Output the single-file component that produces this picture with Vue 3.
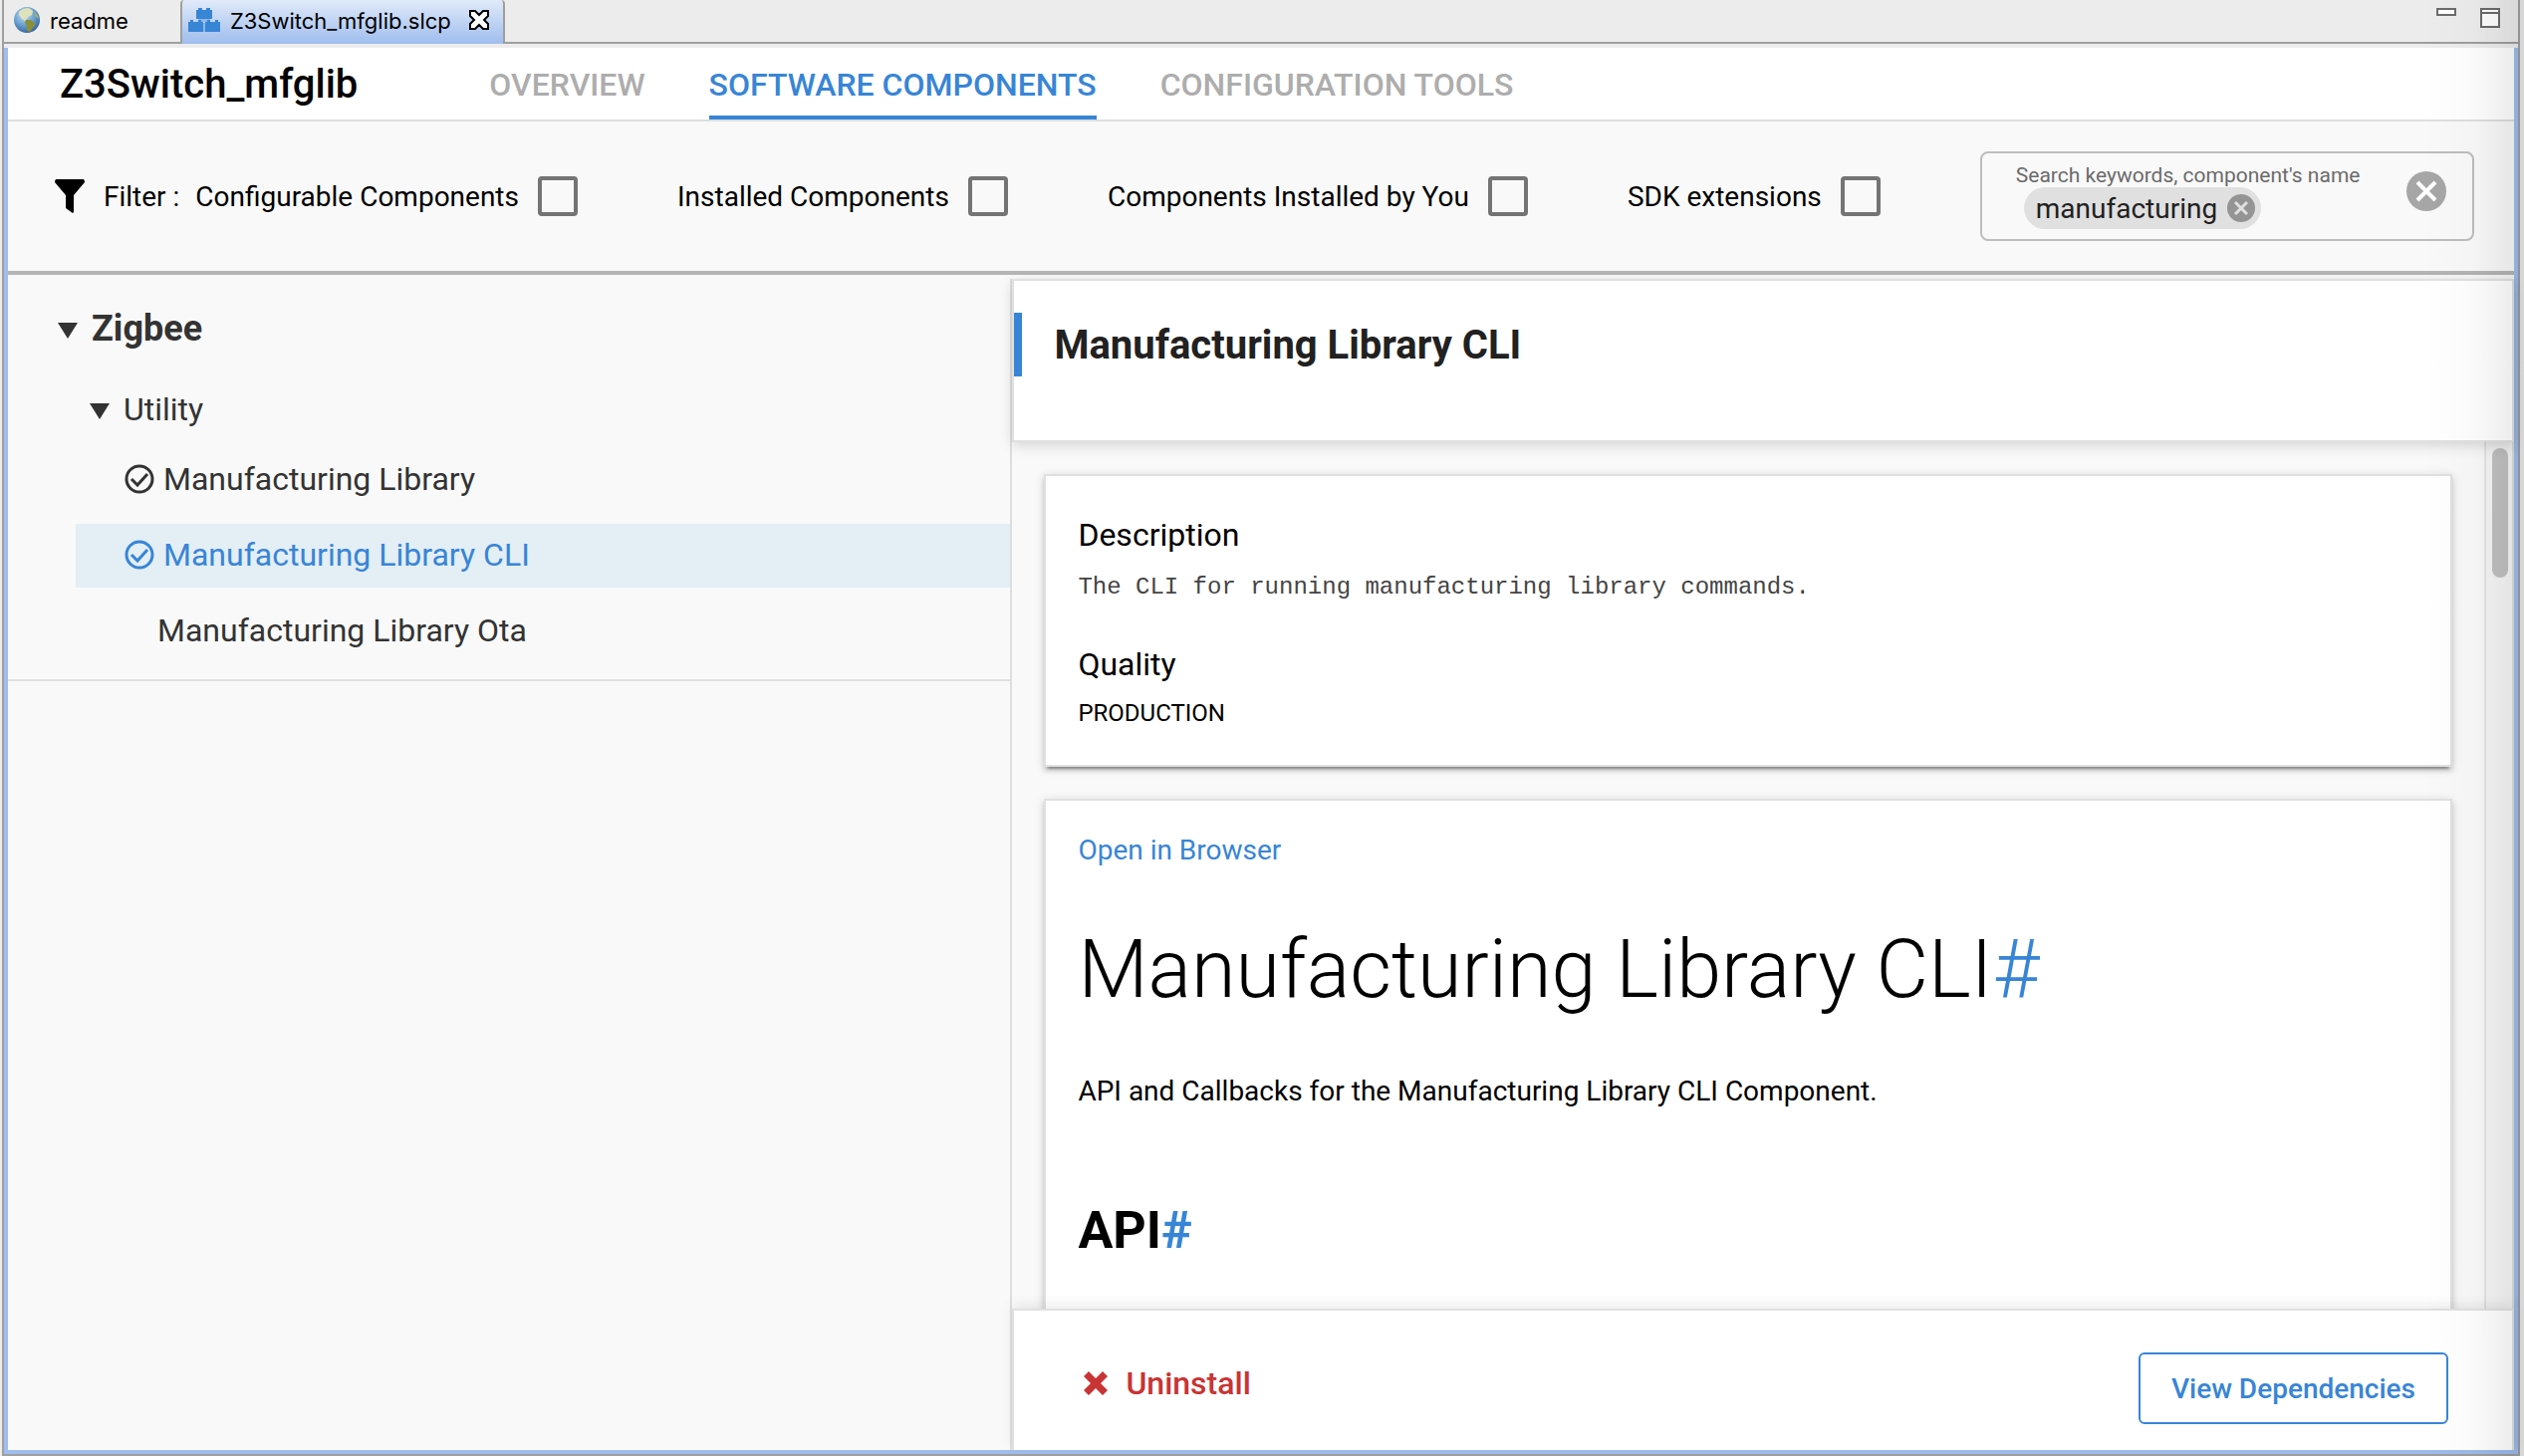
<script setup>
import { ref } from 'vue'

const pages = ['OVERVIEW', 'SOFTWARE COMPONENTS', 'CONFIGURATION TOOLS']
const activePage = ref('SOFTWARE COMPONENTS')

const filters = ref([
  { id: 'configurable', label: 'Configurable Components', on: false },
  { id: 'installed', label: 'Installed Components', on: false },
  { id: 'by-you', label: 'Components Installed by You', on: false },
  { id: 'sdk', label: 'SDK extensions', on: false },
])

const components = [
  { name: 'Manufacturing Library', installed: true },
  { name: 'Manufacturing Library CLI', installed: true },
  { name: 'Manufacturing Library Ota', installed: false },
]
const selected = ref('Manufacturing Library CLI')
</script>

<template>
  <div class="window">
    <div class="editor">
      <div class="file-tabs">
        <button class="file-tab" type="button">
          <svg class="globe" viewBox="0 0 26 26" aria-hidden="true">
            <defs>
              <radialGradient id="sea" cx="0.4" cy="0.3" r="0.75">
                <stop offset="0" stop-color="#cfe3f2" />
                <stop offset="0.5" stop-color="#6fa5d3" />
                <stop offset="1" stop-color="#2f5f9c" />
              </radialGradient>
            </defs>
            <circle cx="13" cy="13" r="13" fill="url(#sea)" />
            <path d="M5 5 Q9 1 15 1 L19 4 L18 8 L14 10 L11 14 L8 12 L5 8Z" fill="#dfe3bd" />
            <path d="M12 13 L17 13 L22 17 L19 21 L16 25 L13 24 L13 19 L11 16Z" fill="#8b8f3c" />
            <path d="M20 4 L24 9 L25 12 L21 9Z" fill="#a5b26a" />
          </svg>
          <span>readme</span>
        </button>
        <button class="file-tab current" type="button">
          <svg class="bricks" viewBox="0 0 32 24" aria-hidden="true">
            <path fill="#8db8e8" d="M10 10h12v4H10zM15 15h2v9h-2z" />
            <path fill="#3885d6" d="M8 2h2V0h4v2h4V0h4v2h2v9H8zM0 14h2v-2h3v2h5v-2h3v2h2v10H0zM17 14h2v-2h3v2h5v-2h3v2h2v10H17z" />
          </svg>
          <span>Z3Switch_mfglib.slcp</span>
          <svg class="close" viewBox="0 0 20 20" aria-hidden="true">
            <path d="M1 1h5l4 4 4-4h5v5l-4 4 4 4v5h-5l-4-4-4 4H1v-5l4-4-4-4z" fill="#fff" stroke="#000" stroke-width="2" />
          </svg>
        </button>
        <div class="window-controls">
          <button type="button" aria-label="Minimize">
            <svg width="20" height="20" viewBox="0 0 20 20"><rect x="1" y="1" width="18" height="6" fill="#fff" stroke="#6b6b6b" stroke-width="2" /></svg>
          </button>
          <button type="button" aria-label="Maximize">
            <svg width="20" height="20" viewBox="0 0 20 20"><path d="M1 1h18v18H1zM1 5h18" fill="#fff" stroke="#6b6b6b" stroke-width="2" /></svg>
          </button>
        </div>
      </div>

      <div class="content">
        <header class="page-head">
          <h1>Z3Switch_mfglib</h1>
          <nav>
            <a v-for="page in pages" :key="page" href="#" :class="{ active: page === activePage }" @click.prevent="activePage = page">{{ page }}</a>
          </nav>
        </header>

        <section class="filters">
          <div class="filter-lead">
            <svg class="funnel" viewBox="0 0 30 34" aria-hidden="true">
              <path d="M1 0h28q1 1 1 3L19 16v17l-1 1-7-5V16L0 3q0-2 1-3z" fill="#000" />
            </svg>
            <span>Filter :</span>
          </div>
          <div class="filter-list">
            <div v-for="f in filters" :key="f.id" class="filter">
              <label :for="f.id">{{ f.label }}</label>
              <input :id="f.id" v-model="f.on" type="checkbox">
            </div>
          </div>
          <div class="search">
            <div class="search-main">
              <label for="search">Search keywords, component's name</label>
              <div class="search-line">
                <span class="chip">
                  manufacturing
                  <button type="button" aria-label="Remove manufacturing">
                    <svg width="28" height="28" viewBox="0 0 28 28"><circle cx="14" cy="14" r="14" fill="#949494" /><path d="M8 8l12 12M20 8L8 20" stroke="#e0e0e0" stroke-width="3" /></svg>
                  </button>
                </span>
                <input id="search" type="text">
              </div>
            </div>
            <button class="clear" type="button" aria-label="Clear search">
              <svg width="40" height="40" viewBox="0 0 40 40"><circle cx="20" cy="20" r="20" fill="#a6a6a6" /><path d="M11 11l18 18M29 11L11 29" stroke="#fff" stroke-width="4" /></svg>
            </button>
          </div>
        </section>

        <main class="panes">
          <aside class="tree">
            <div class="group">
              <svg class="arrow" viewBox="0 0 20 16" aria-hidden="true"><path d="M0 0h20L10 16z" fill="#333" /></svg>
              <span>Zigbee</span>
            </div>
            <div class="subgroup">
              <svg class="arrow" viewBox="0 0 20 16" aria-hidden="true"><path d="M0 0h20L10 16z" fill="#333" /></svg>
              <span>Utility</span>
            </div>
            <ul>
              <li v-for="c in components" :key="c.name">
                <button type="button" :class="{ selected: c.name === selected, bare: !c.installed }" @click="selected = c.name">
                  <svg v-if="c.installed" class="check" viewBox="0 0 30 30" aria-hidden="true">
                    <circle cx="15" cy="15" r="13" fill="none" stroke="currentColor" stroke-width="3" />
                    <path d="M7 15l6 6L23 10" fill="none" stroke="currentColor" stroke-width="3" />
                  </svg>
                  <span>{{ c.name }}</span>
                </button>
              </li>
            </ul>
          </aside>

          <section class="details">
            <div class="details-head">
              <h2>Manufacturing Library CLI</h2>
            </div>
            <div class="details-body">
              <div class="cards">
                <article class="card summary">
                  <h3>Description</h3>
                  <p class="mono">The CLI for running manufacturing library commands.</p>
                  <h3>Quality</h3>
                  <p class="quality">PRODUCTION</p>
                </article>
                <article class="card docs">
                  <a class="open" href="#">Open in Browser</a>
                  <h1>Manufacturing Library CLI<a href="#">#</a></h1>
                  <p>API and Callbacks for the Manufacturing Library CLI Component.</p>
                  <h2>API<a href="#">#</a></h2>
                </article>
              </div>
              <div class="scrollbar" aria-hidden="true"><div class="thumb"></div></div>
            </div>
            <footer>
              <button class="uninstall" type="button">
                <svg width="26" height="26" viewBox="0 0 26 26" aria-hidden="true"><path d="M6 1l7 7 7-7 5 5-7 7 7 7-5 5-7-7-7 7-5-5 7-7-7-7z" fill="#c93434" /></svg>
                Uninstall
              </button>
              <button class="dependencies" type="button">View Dependencies</button>
            </footer>
          </section>
        </main>
      </div>
    </div>
  </div>
</template>

<style>
body {
  margin: 0;
}
</style>

<style scoped>
* {
  box-sizing: border-box;
}

h1,
h2,
h3,
p,
ul {
  margin: 0;
  padding: 0;
}

button {
  font: inherit;
  color: inherit;
  background: none;
  border: 0;
  padding: 0;
  cursor: pointer;
}

svg {
  display: block;
  flex: none;
}

a {
  color: #3885d6;
  text-decoration: none;
}

.window {
  position: relative;
  height: 100vh;
  padding: 0 4px 0 2px;
  background: #ececec;
  font-family: Roboto, "Liberation Sans", sans-serif;
  font-size: 28px;
  color: #000;
}

.window::after {
  content: "";
  position: absolute;
  inset: 0 0 0 auto;
  width: 100px;
  background: linear-gradient(to right, transparent, rgba(0, 0, 0, 0.02) 50%, rgba(0, 0, 0, 0.09));
  pointer-events: none;
}

.editor {
  display: flex;
  flex-direction: column;
  height: 100%;
  border: 2px solid #9f9f9f;
  border-top: 0;
}

.file-tabs {
  display: flex;
  height: 44px;
  flex: none;
  border-bottom: 2px solid #9f9f9f;
  font-family: Inter, "Liberation Sans", sans-serif;
  font-size: 22px;
}

.file-tab {
  display: flex;
  align-items: center;
  height: 44px;
  gap: 10px;
  padding: 0 52px 4px 10px;
}

.file-tab.current {
  padding: 0 14px 4px 6px;
  border: 2px solid #9f9f9f;
  border-width: 0 2px;
  border-radius: 4px 4px 0 0;
  background: linear-gradient(#e0eaf9, #9fbdee);
}

.file-tab span {
  padding-top: 2px;
}

.globe {
  width: 26px;
  height: 26px;
}

.bricks {
  width: 32px;
  height: 24px;
}

.close {
  width: 20px;
  height: 20px;
  margin-left: 8px;
}

.window-controls {
  display: flex;
  gap: 24px;
  margin-left: auto;
  padding: 8px 18px 0 0;
  align-items: flex-start;
}

.content {
  display: flex;
  flex: 1;
  flex-direction: column;
  min-height: 0;
  margin-top: 4px;
  border: 4px solid #9fbdee;
  border-top: 0;
  background: #f9f9f9;
}

.page-head {
  display: flex;
  flex: none;
  height: 74px;
  padding-left: 52px;
  gap: 132px;
  background: #fff;
  border-bottom: 2px solid #dedede;
}

.page-head h1 {
  font-size: 40px;
  font-weight: 500;
  line-height: 74px;
}

.page-head nav {
  display: flex;
  gap: 64px;
}

.page-head nav a {
  font-size: 32px;
  font-weight: 500;
  line-height: 74px;
  height: 72px;
  color: #adadad;
}

.page-head nav a.active {
  color: #3885d6;
  border-bottom: 4px solid #3885d6;
}

.filters {
  display: flex;
  flex: none;
  align-items: center;
  height: 154px;
  padding: 0 40px 0 47px;
  border-bottom: 4px solid #b5b5b5;
}

.filter-lead {
  display: flex;
  align-items: center;
  gap: 19px;
  margin-right: 16px;
}

.funnel {
  width: 30px;
  height: 34px;
}

.filter-list {
  display: flex;
  gap: 100px;
  margin-right: 100px;
}

.filter {
  display: flex;
  align-items: center;
  gap: 19px;
  white-space: nowrap;
}

.filter input {
  appearance: none;
  width: 40px;
  height: 40px;
  margin: 0;
  border: 4px solid #747474;
  border-radius: 4px;
}

.search {
  display: flex;
  flex: 1;
  min-width: 0;
  height: 90px;
  padding: 10px 26px 0 34px;
  border: 2px solid #bdbdbd;
  border-radius: 8px;
}

.search-main {
  flex: 1;
  min-width: 0;
}

.search-main > label {
  display: block;
  font-size: 21px;
  line-height: 24px;
  color: #6b6b6b;
  white-space: nowrap;
}

.search-line {
  display: flex;
  padding-left: 8px;
}

.search-line input {
  flex: 1;
  min-width: 0;
  border: 0;
  outline: 0;
  background: none;
}

.chip {
  display: flex;
  align-items: center;
  gap: 10px;
  height: 42px;
  padding: 0 6px 0 12px;
  border-radius: 21px;
  background: #e0e0e0;
  color: #212121;
}

.clear {
  align-self: flex-start;
  margin-top: 8px;
}

.panes {
  display: flex;
  flex: 1;
  min-height: 0;
  padding-top: 4px;
}

.tree {
  width: 40%;
  color: #333;
  font-size: 32px;
}

.group,
.subgroup {
  display: flex;
  align-items: center;
  gap: 14px;
}

.group {
  height: 100px;
  padding-left: 50px;
  font-size: 36px;
  font-weight: 700;
}

.subgroup {
  height: 62px;
  padding-left: 82px;
}

.arrow {
  width: 20px;
  height: 16px;
  margin-top: 4px;
}

.tree ul {
  display: flex;
  flex-direction: column;
  gap: 12px;
  padding: 8px 0 16px 68px;
  border-bottom: 2px solid #e0e0e0;
  list-style: none;
}

.tree li button {
  display: flex;
  align-items: center;
  gap: 9px;
  width: 100%;
  height: 64px;
  padding: 0 0 2px 49px;
}

.tree li button.bare {
  padding-left: 82px;
}

.tree li button.selected {
  background: #e3eef5;
  color: #3885d6;
}

.check {
  width: 30px;
  height: 30px;
}

.details {
  display: flex;
  flex: 1;
  flex-direction: column;
  min-width: 0;
  border-left: 2px solid #dedede;
}

.details-head {
  position: relative;
  flex: none;
  height: 164px;
  padding-top: 32px;
  background: #fff;
  border: 2px solid #e0e0e0;
  box-shadow: 0 4px 12px rgba(0, 0, 0, 0.14);
}

.details-head h2 {
  height: 64px;
  padding-left: 32px;
  border-left: 8px solid #3885d6;
  font-size: 40px;
  font-weight: 700;
  line-height: 66px;
  color: #212121;
}

.details-body {
  display: flex;
  flex: 1;
  min-height: 0;
  border-right: 2px solid #dedede;
}

.cards {
  flex: 1;
  padding: 32px 32px 0;
  overflow: hidden;
}

.card {
  padding: 0 32px;
  margin-bottom: 32px;
  background: #fff;
  border: 2px solid #e0e0e0;
  box-shadow: 0 6px 2px -4px rgba(0, 0, 0, 0.3), 0 4px 4px rgba(0, 0, 0, 0.14), 0 2px 10px rgba(0, 0, 0, 0.14);
}

.summary {
  padding-top: 40px;
  padding-bottom: 36px;
}

.summary h3 {
  font-size: 32px;
  font-weight: 400;
  line-height: 38px;
}

.summary p {
  font-size: 24px;
  line-height: 32px;
}

.summary .mono {
  margin: 18px 0 42px;
  font-family: "Liberation Mono", monospace;
  color: #444;
}

.summary .quality {
  margin-top: 14px;
}

.docs {
  height: 1200px;
  padding-top: 34px;
}

.docs .open {
  display: block;
  line-height: 32px;
}

.docs h1 {
  margin-top: 54px;
  font-size: 81px;
  font-weight: 300;
  line-height: 100px;
}

.docs p {
  margin-top: 52px;
  line-height: 40px;
}

.docs h2 {
  margin-top: 90px;
  font-size: 52px;
  font-weight: 700;
  line-height: 60px;
}

.scrollbar {
  width: 28px;
  padding: 6px 4px 0 6px;
  border-left: 2px solid #e4e4e4;
  background: #f6f6f6;
}

.thumb {
  width: 16px;
  height: 15%;
  border-radius: 8px;
  background: #c1c1c1;
}

footer {
  position: relative;
  display: flex;
  flex: none;
  align-items: flex-start;
  justify-content: space-between;
  padding: 42px 64px 26px 69px;
  background: #fff;
  border: 2px solid #e0e0e0;
  border-bottom: 0;
  box-shadow: 0 -4px 12px rgba(0, 0, 0, 0.08);
}

.uninstall {
  display: flex;
  align-items: center;
  gap: 17px;
  height: 62px;
  font-size: 32px;
  font-weight: 500;
  color: #c93434;
}

.dependencies {
  height: 72px;
  padding: 0 31px;
  border: 2px solid #3885d6;
  border-radius: 6px;
  font-weight: 500;
  color: #3885d6;
}
</style>
